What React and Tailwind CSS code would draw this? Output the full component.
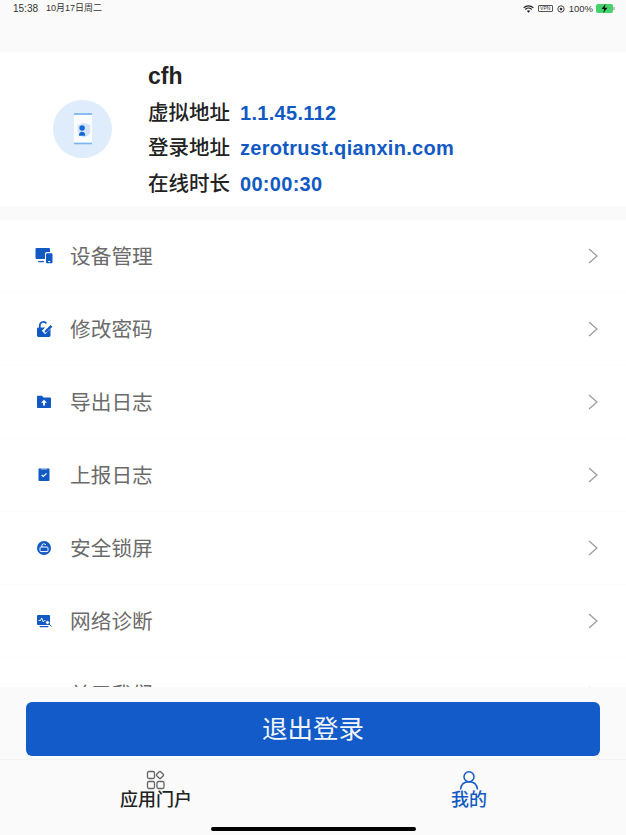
const cjk = "font-['Liberation_Sans','Noto_Sans_CJK_SC',sans-serif]"

const DeviceIcon = () => (
  <svg width="20" height="20" viewBox="0 0 20 20" fill="#1259c3">
    <path d="M1.500 3a1 1 0 0 1 1-1h12.500a1 1 0 0 1 1 1v3h-3.200a1.800 1.800 0 0 0-1.800 1.800v5.200H2.500a1 1 0 0 1-1-1z" />
    <rect x="4" y="15" width="6" height="1.200" rx=".6" />
    <path fillRule="evenodd" d="M13 7.200h4.500a1 1 0 0 1 1 1v8a1 1 0 0 1-1 1H13a1 1 0 0 1-1-1v-8a1 1 0 0 1 1-1zm1.200 7.800v1h2v-1z" />
  </svg>
)

const LockEditIcon = () => (
  <svg width="20" height="20" viewBox="0 0 20 20" fill="none">
    <path d="M5.800 9V6.500a3.600 3.600 0 0 1 6.600-2" stroke="#1259c3" strokeWidth="1.700" />
    <rect x="3" y="8.500" width="13.500" height="9.500" rx="1.400" fill="#1259c3" />
    <path d="M9.500 13.500L16.500 6.500" stroke="#fff" strokeWidth="4.600" />
    <path d="M10.500 13.800l.5-2.300 5.600-5.600 1.800 1.800-5.600 5.600z" fill="#1259c3" />
  </svg>
)

const FolderIcon = () => (
  <svg width="20" height="20" viewBox="0 0 20 20">
    <path d="M3 4.500a.8.8 0 0 1 .8-.8h4.200l1.500 1.800h6.700a.8.8 0 0 1 .8.800v8.900a.8.8 0 0 1-.8.800H3.800a.8.8 0 0 1-.8-.8z" fill="#1259c3" />
    <path d="M10 7.800l3 3h-2v2.700H9v-2.700H7z" fill="#fff" />
  </svg>
)

const ClipboardIcon = () => (
  <svg width="20" height="20" viewBox="0 0 20 20">
    <rect x="4.500" y="3.500" width="11" height="12.500" rx=".8" fill="#1259c3" />
    <rect x="7" y="3" width="6" height="1.600" fill="#9dbdea" />
    <path d="M7.600 9.800l1.700 1.700 3.200-3.200" fill="none" stroke="#fff" strokeWidth="1.200" />
  </svg>
)

const LockCircleIcon = () => (
  <svg width="20" height="20" viewBox="0 0 20 20" fill="none">
    <circle cx="10" cy="10" r="7" fill="#1259c3" />
    <rect x="6" y="9" width="8" height="4.600" rx="1" stroke="#fff" strokeWidth="1" />
    <path d="M7.800 9V7.800a2.100 2.100 0 0 1 4-.8" stroke="#fff" strokeWidth="1" />
  </svg>
)

const MonitorIcon = () => (
  <svg width="20" height="20" viewBox="0 0 20 20" fill="none">
    <rect x="3" y="4" width="13" height="10" rx="1" fill="#1259c3" />
    <rect x="5.500" y="15" width="9" height="1.200" rx=".6" fill="#1259c3" />
    <path d="M4.500 9.500h2l1.200-2.500 1.600 4 1-1.500h1" stroke="#fff" strokeWidth=".9" />
    <circle cx="13.500" cy="11.500" r="2" fill="#fff" stroke="#1259c3" strokeWidth=".9" />
    <path d="M15 13l2.500 2.500" stroke="#1259c3" strokeWidth="1" />
  </svg>
)

const menu = [
  { label: '设备管理', icon: <DeviceIcon /> },
  { label: '修改密码', icon: <LockEditIcon /> },
  { label: '导出日志', icon: <FolderIcon /> },
  { label: '上报日志', icon: <ClipboardIcon /> },
  { label: '安全锁屏', icon: <LockCircleIcon /> },
  { label: '网络诊断', icon: <MonitorIcon /> },
  { label: '关于我们', icon: <ClipboardIcon /> },
]

const info = [
  { label: '虚拟地址', value: '1.1.45.112' },
  { label: '登录地址', value: 'zerotrust.qianxin.com' },
  { label: '在线时长', value: '00:00:30' },
]

const StatusBar = () => (
  <div className="h-[52px] shrink-0 bg-[#fafafa] pl-[13px] pr-[11px] pt-[3px]">
    <div className="flex h-[11px] items-center justify-between text-[10px] leading-none text-[#333]">
      <div className="flex items-center gap-[8px]">
        <span>15:38</span>
        <span className="text-[9px]">10月17日周二</span>
      </div>
      <div className="flex items-center gap-[3px]">
        <svg width="11" height="8" viewBox="0 0 11 8" fill="none" stroke="#222" strokeWidth="1.200">
          <path d="M.7 2.800a7 7 0 0 1 9.600 0M2.300 4.500a4.600 4.600 0 0 1 6.400 0" />
          <path d="M5.500 7.800L3.900 6a2.300 2.300 0 0 1 3.200 0z" fill="#222" stroke="none" />
        </svg>
        <span className="ml-[1px] flex h-[7px] w-[15px] items-center justify-center rounded-[1px] border border-[#555] text-[5px]">VPN</span>
        <svg width="8" height="8" viewBox="0 0 8 8" className="ml-[1px]" fill="none">
          <circle cx="4" cy="4" r="3.200" stroke="#333" strokeWidth=".9" />
          <circle cx="4" cy="4" r="1.300" fill="#333" />
        </svg>
        <span className="ml-[1px] text-[9.500px]">100%</span>
        <svg width="19" height="9" viewBox="0 0 19 9">
          <rect x="0" y="0" width="17" height="9" rx="2" fill="#45d16c" />
          <rect x="17.400" y="3" width="1.200" height="3" fill="#999" />
          <path d="M9.500 0L5.500 5h2.700L7.300 9l4.200-5.200H8.800z" fill="#111" />
        </svg>
      </div>
    </div>
  </div>
)

const Profile = () => (
  <div className="flex h-[154px] shrink-0 bg-white">
    <div className="flex w-[148px] items-center pl-[53px]">
      <div className="flex h-[58px] w-[59px] items-center justify-center rounded-full bg-[#deecfb]">
        <svg width="20" height="34" viewBox="0 0 22 35">
          <rect x="1" y="0" width="20" height="35" fill="#fbfdff" />
          <rect x="1" y="0" width="20" height="2" fill="#7cb6f2" />
          <rect x="1" y="32.500" width="20" height="2" fill="#7cb6f2" />
          <path d="M5 13l7-2.500 7 2.500v7c0 3.500-3 5.500-7 7-4-1.500-7-3.500-7-7z" fill="#d5e5f8" />
          <circle cx="10" cy="16.500" r="3" fill="#1469d6" />
          <path d="M6.500 25c0-3 1.500-4.500 3.500-4.500s3.500 1.500 3.500 4.500z" fill="#1469d6" />
        </svg>
      </div>
    </div>
    <div className="flex flex-col">
      <div className="mt-[9px] h-[30px] text-[23px] font-bold leading-[30px] text-[#222]">cfh</div>
      <div className="mt-[5px] flex flex-col gap-[2.500px]">
        {info.map((row) => (
          <div key={row.label} className="flex h-[33px] items-center">
            <span className="w-[92px] pt-[1px] text-[20.500px] font-medium text-[#222]">{row.label}</span>
            <span className="text-[20px] font-bold tracking-[0.3px] text-[#1259c3]">{row.value}</span>
          </div>
        ))}
      </div>
    </div>
  </div>
)

const MenuRow = ({ label, icon }) => (
  <div className="flex h-[73px] shrink-0 items-center border-b border-[#fcfcfc] pl-[34px] pr-[27px]">
    <span className="flex w-[36px]">{icon}</span>
    <span className="flex-1 pt-[1px] text-[20.700px] text-[#6b6b6b]">{label}</span>
    <svg width="12" height="18" viewBox="0 0 12 18" fill="none" stroke="#999" strokeWidth="1.200">
      <path d="M2 2l8 7-8 7" />
    </svg>
  </div>
)

const AppsIcon = () => (
  <svg width="20" height="20" viewBox="0 0 20 20" fill="none" stroke="#666" strokeWidth="1.300">
    <rect x="1.500" y="1.500" width="7" height="7" rx="1.500" />
    <rect x="11.200" y="2.200" width="5.600" height="5.600" rx="1" transform="rotate(45 14 5)" />
    <rect x="1.500" y="11.500" width="7" height="7" rx="1.500" />
    <rect x="11" y="11.500" width="7" height="7" rx="1.500" />
  </svg>
)

const UserIcon = () => (
  <svg width="20" height="20" viewBox="0 0 20 20" fill="none" stroke="#1259c3" strokeWidth="1.500">
    <circle cx="10" cy="6.800" r="5" />
    <path d="M1.500 19.500c.5-5 4-7.700 8.500-7.700s8 2.700 8.500 7.700" />
  </svg>
)

export default function App() {
  return (
    <div className={`flex h-[835px] w-[626px] flex-col overflow-hidden bg-[#fafafa] ${cjk}`}>
      <StatusBar />
      <Profile />
      <div className="h-[14px] shrink-0 bg-[#fafafa]" />
      <div className="h-[467px] shrink-0 overflow-hidden bg-white">
        {menu.map((item) => (
          <MenuRow key={item.label} label={item.label} icon={item.icon} />
        ))}
      </div>
      <div className="flex flex-1 flex-col">
        <div className="px-[26px] pt-[15px]">
          <button className="flex h-[54px] w-full items-center justify-center rounded-[6px] bg-[#125bc8] text-[25.500px] text-[#f2f6fc]">
            退出登录
          </button>
        </div>
        <div className="mt-[3px] flex flex-1 flex-col border-t border-[#f2f2f2]">
          <div className="flex pt-[10px]">
            <div className="flex w-[312px] flex-col items-center">
              <AppsIcon />
              <span className="text-[18px] font-medium leading-[21px] text-[#222]">应用门户</span>
            </div>
            <div className="flex w-[314px] flex-col items-center">
              <UserIcon />
              <span className="text-[18px] font-medium leading-[21px] text-[#1259c3]">我的</span>
            </div>
          </div>
          <div className="mx-auto mt-[16px] h-[4px] w-[205px] rounded-full bg-black" />
        </div>
      </div>
    </div>
  )
}
